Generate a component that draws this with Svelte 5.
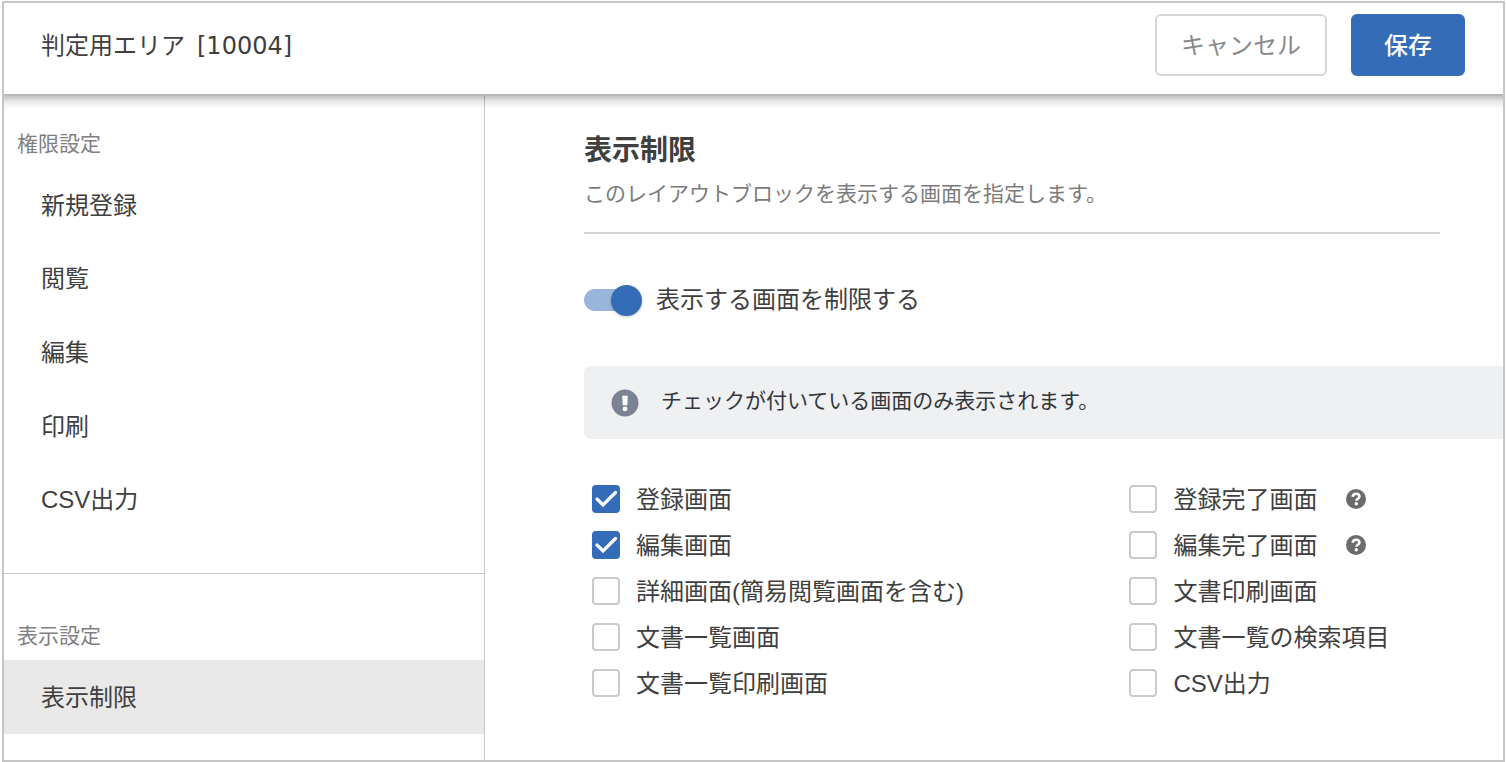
<script>
  const permissionItems = ['新規登録', '閲覧', '編集', '印刷', 'CSV出力'];
  const displayItems = ['表示制限'];
  let current = $state('表示制限');
  let limited = $state(true);

  let screens = $state([
    { id: 'create', label: '登録画面', checked: true },
    { id: 'create-done', label: '登録完了画面', checked: false, help: true },
    { id: 'edit', label: '編集画面', checked: true },
    { id: 'edit-done', label: '編集完了画面', checked: false, help: true },
    { id: 'detail', label: '詳細画面(簡易閲覧画面を含む)', checked: false },
    { id: 'print', label: '文書印刷画面', checked: false },
    { id: 'list', label: '文書一覧画面', checked: false },
    { id: 'search', label: '文書一覧の検索項目', checked: false },
    { id: 'list-print', label: '文書一覧印刷画面', checked: false },
    { id: 'csv', label: 'CSV出力', checked: false }
  ]);
</script>

{#snippet menu(items)}
  <ul class="menu">
    {#each items as item}
      <li>
        <button class="menu-item" class:active={item === current} onclick={() => (current = item)}>{item}</button>
      </li>
    {/each}
  </ul>
{/snippet}

<div class="frame">
  <header>
    <h1>判定用エリア <span class="code">[10004]</span></h1>
    <div class="actions">
      <button class="btn cancel">キャンセル</button>
      <button class="btn save">保存</button>
    </div>
  </header>

  <div class="body">
    <nav>
      <section class="permissions">
        <h2>権限設定</h2>
        {@render menu(permissionItems)}
      </section>
      <section class="display">
        <h2>表示設定</h2>
        {@render menu(displayItems)}
      </section>
    </nav>

    <main>
      <div class="intro">
        <h2>表示制限</h2>
        <p>このレイアウトブロックを表示する画面を指定します。</p>
      </div>

      <div class="toggle-row">
        <input id="limit" class="switch" type="checkbox" role="switch" bind:checked={limited} />
        <label for="limit">表示する画面を制限する</label>
      </div>

      <div class="notice">
        <svg width="28" height="28" viewBox="0 0 28 28" aria-hidden="true">
          <circle cx="14" cy="14" r="13.5" fill="#7b8294" />
          <path d="M11.2 6.8h5.6l-.5 9.400h-4.600z" fill="#fff" />
          <circle cx="14" cy="19.9" r="2.4" fill="#fff" />
        </svg>
        <p>チェックが付いている画面のみ表示されます。</p>
      </div>

      <div class="screens">
        {#each screens as screen (screen.id)}
          <div class="option">
            <input id={screen.id} class="box" type="checkbox" bind:checked={screen.checked} />
            <label for={screen.id}>{screen.label}</label>
            {#if screen.help}
              <button class="help" aria-label="ヘルプ">
                <svg width="20" height="20" viewBox="0 0 20 20" aria-hidden="true">
                  <circle cx="10" cy="10" r="10" fill="#6b6b6b" />
                  <path d="M6.600 7.700C6.900 5.800 8.200 4.800 10.100 4.800c2 0 3.300 1 3.300 2.700 0 2.200-3 2.200-3 4.300" fill="none" stroke="#fff" stroke-width="2.600" />
                  <circle cx="10.300" cy="14.700" r="1.700" fill="#fff" />
                </svg>
              </button>
            {/if}
          </div>
        {/each}
      </div>
    </main>
  </div>
</div>

<style>
  :global(body) {
    background: #fff;
  }

  :global(#app) {
    padding: 1px 1px 0 2px;
  }

  .frame,
  .frame * {
    box-sizing: border-box;
  }

  .frame {
    display: flex;
    flex-direction: column;
    min-height: calc(100vh - 1px);
    border: 2px solid #c6c6c6;
    background: #fff;
    color: #3f3f3f;
    font-family: 'Liberation Sans', 'Noto Sans CJK JP', sans-serif;
    font-size: 24px;
    line-height: 32px;
  }

  h1,
  h2,
  p,
  ul {
    margin: 0;
    padding: 0;
    font-weight: 400;
  }

  button {
    font: inherit;
    cursor: pointer;
  }

  header {
    position: relative;
    display: flex;
    align-items: center;
    justify-content: space-between;
    padding: 11px 38px 18px 37px;
    border-bottom: 2px solid #b8b8b8;
    background: #fff;
  }

  /* soft shadow that runs the full width under the bar */
  header::after {
    content: '';
    position: absolute;
    top: calc(100% + 2px);
    left: 0;
    right: 0;
    height: 16px;
    background: linear-gradient(rgba(0, 0, 0, 0.24), rgba(0, 0, 0, 0.09) 35%, rgba(0, 0, 0, 0.02) 70%, transparent);
    pointer-events: none;
  }

  h1 {
    display: flex;
    gap: 12px;
    padding-top: 2px;
    font-size: 24px;
  }

  .code {
    font-family: 'DejaVu Sans', sans-serif;
  }

  .actions {
    display: flex;
    gap: 24px;
  }

  .btn {
    height: 62px;
    padding-top: 2px;
    border: 2px solid #d5d6d8;
    border-radius: 6px;
    background: #fff;
  }

  .cancel {
    padding-inline: 24px;
    color: #86888b;
  }

  .save {
    padding-inline: 31px;
    border-color: #346cb8;
    background: #346cb8;
    color: #fff;
    font-weight: 500;
  }

  .body {
    display: flex;
    flex: 1;
  }

  nav {
    flex: 0 0 481px;
    border-right: 1px solid #c9cacc;
  }

  nav h2 {
    padding: 0 13px 8px;
    color: #7f7f7f;
    font-size: 21px;
  }

  .permissions {
    padding: 32px 0 37px;
  }

  .display {
    padding-top: 46px;
    border-top: 1px solid #c8c8c8;
  }

  .menu {
    display: grid;
    grid-auto-rows: 1fr;
    list-style: none;
  }

  .permissions .menu {
    min-height: 368px;
  }

  .menu-item {
    display: block;
    width: 100%;
    height: 100%;
    min-height: 74px;
    padding: 2px 37px 0;
    border: 0;
    background: transparent;
    color: inherit;
    text-align: left;
  }

  .permissions .menu-item {
    min-height: 73px;
  }

  .active {
    background: #e9e9e9;
  }

  main {
    flex: 1;
    min-width: 0;
    padding: 35px 0 48px 99px;
  }

  .intro {
    margin-right: 63px;
    padding-bottom: 22px;
    border-bottom: 2px solid #d4d4d8;
  }

  .intro h2 {
    font-size: 28px;
    font-weight: 700;
    line-height: 40px;
  }

  .intro p {
    padding-top: 7px;
    color: #7b7b7b;
    font-size: 21px;
  }

  .toggle-row {
    display: flex;
    align-items: center;
    gap: 14px;
    margin-top: 50px;
  }

  .switch {
    appearance: none;
    position: relative;
    display: flex;
    align-items: center;
    width: 58px;
    height: 31px;
    margin: 0;
  }

  .switch::before {
    content: '';
    width: 54px;
    height: 22px;
    border-radius: 11px;
    background: #c4c6ca;
  }

  .switch::after {
    content: '';
    position: absolute;
    left: 0;
    width: 31px;
    height: 31px;
    border-radius: 50%;
    background: #f4f4f4;
    box-shadow: 0 1px 3px rgba(0, 0, 0, 0.2);
  }

  .switch:checked::before {
    background: #9ab5dc;
  }

  .switch:checked::after {
    left: auto;
    right: 0;
    background: #346cb8;
  }

  .notice {
    display: flex;
    align-items: center;
    gap: 22px;
    height: 73px;
    margin-top: 50px;
    padding: 0 27px;
    border-radius: 6px 0 0 6px;
    background: #eff0f2;
    color: #33353b;
    font-size: 21px;
  }

  .notice p {
    padding-bottom: 3px;
  }

  .screens {
    display: grid;
    grid-template-columns: 59% 1fr;
    margin-top: 37px;
    padding-left: 8px;
  }

  .option {
    display: flex;
    align-items: center;
    height: 46px;
  }

  .option label {
    padding: 2px 0 0 16px;
  }

  .box {
    appearance: none;
    width: 28px;
    height: 28px;
    margin: 0;
    border: 2px solid #c9cacd;
    border-radius: 4px;
    background: #fff;
  }

  .box:checked {
    border-color: #346cb8;
    background: #346cb8 url("data:image/svg+xml,%3Csvg xmlns='http://www.w3.org/2000/svg' viewBox='0 0 28 28'%3E%3Cpath d='M5 14l6 6L23.500 7.500' fill='none' stroke='%23fff' stroke-width='3.200' stroke-linecap='round'/%3E%3C/svg%3E") center / 28px 28px no-repeat border-box;
  }

  .help {
    display: flex;
    margin-left: 29px;
    padding: 0;
    border: 0;
    background: none;
  }
</style>
